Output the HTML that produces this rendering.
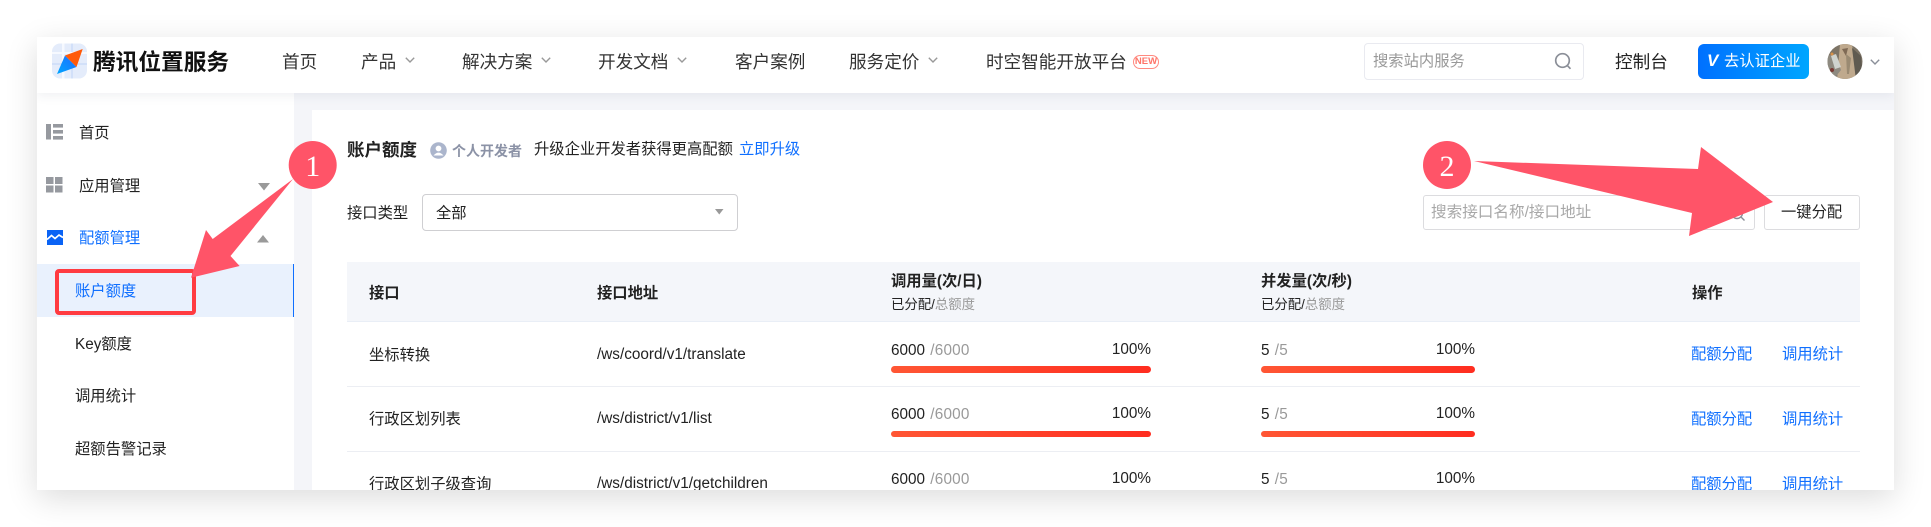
<!DOCTYPE html>
<html lang="zh"><head><meta charset="utf-8"><title>账户额度</title>
<style>
html,body{margin:0;padding:0;width:1931px;height:527px;overflow:hidden;background:#fff}
body{font-family:"Liberation Sans","Noto Sans CJK SC",sans-serif;color:#222;font-size:15.3px}
#panel{position:absolute;left:37px;top:37px;width:1857px;height:453px;overflow:hidden;background:#f4f5f9}
#shadow{position:absolute;left:37px;top:37px;width:1857px;height:453px;box-shadow:0 8px 30px rgba(0,0,0,.14)}
#in{position:absolute;left:-37px;top:-37px;width:1931px;height:527px}
.b{position:absolute;box-sizing:border-box}
.t{position:absolute;white-space:nowrap;transform:translateY(-50%);line-height:24px}
.n{font-size:17.6px;color:#333}
.g{color:#999}
.s{color:#999;margin-left:1px;letter-spacing:.2px}
.l{color:#0f6fff}
.h{font-weight:bold}
.r{transform:translate(-100%,-50%)}
.bar{position:absolute;height:7px;border-radius:4px;background:linear-gradient(90deg,#ff5634,#ff2d20)}
svg{position:absolute;overflow:visible}
</style></head><body>
<div id="shadow"></div>
<div id="panel"><div id="in">
<!-- header -->
<div class="b" style="left:37px;top:37px;width:1857px;height:56px;background:#fff;box-shadow:0 3px 10px rgba(40,50,90,.07);z-index:3">
</div>
<div style="position:absolute;left:0;top:0;z-index:4;width:1931px;height:100px">
<svg width="36" height="36" viewBox="52 43 36 36" style="left:52px;top:43px">
<defs>
<linearGradient id="lg" x1="0" y1="1" x2="1" y2="0"><stop offset="0" stop-color="#00a6ff"/><stop offset="1" stop-color="#1f6cff"/></linearGradient>
<clipPath id="lc"><rect x="52" y="43.500" width="35" height="35" rx="8"/></clipPath>
</defs>
<g clip-path="url(#lc)">
<rect x="52" y="43" width="36" height="36" fill="#e4ecfb"/>
<rect x="62" y="43" width="2.500" height="36" fill="#f6f9ff"/>
<rect x="71" y="43" width="2" height="36" fill="#d2e0f9"/>
<rect x="52" y="63" width="36" height="2" fill="#d2e0f9"/>
<rect x="52" y="52" width="36" height="2" fill="#f6f9ff"/>
</g>
<path d="M57 74L65 55.500L76.500 67Z" fill="url(#lg)"/>
<path d="M82.700 49L65 55.500L76.500 67Z" fill="#ff5a0a"/>
</svg>
<div class="t" style="left:93px;top:62px;font-size:22.700px;font-weight:bold;color:#111">腾讯位置服务</div>
<div class="t n" style="left:282px;top:62px">首页</div>
<div class="t n" style="left:361px;top:62px">产品</div>
<div class="t n" style="left:462px;top:62px">解决方案</div>
<div class="t n" style="left:598px;top:62px">开发文档</div>
<div class="t n" style="left:735px;top:62px">客户案例</div>
<div class="t n" style="left:849px;top:62px">服务定价</div>
<div class="t n" style="left:986px;top:62px">时空智能开放平台</div>
<svg width="10" height="6" style="left:405px;top:57px"><path d="M.8 .8L5 5L9.200 .8" fill="none" stroke="#999" stroke-width="1.400"/></svg>
<svg width="10" height="6" style="left:541px;top:57px"><path d="M.8 .8L5 5L9.200 .8" fill="none" stroke="#999" stroke-width="1.400"/></svg>
<svg width="10" height="6" style="left:677px;top:57px"><path d="M.8 .8L5 5L9.200 .8" fill="none" stroke="#999" stroke-width="1.400"/></svg>
<svg width="10" height="6" style="left:928px;top:57px"><path d="M.8 .8L5 5L9.200 .8" fill="none" stroke="#999" stroke-width="1.400"/></svg>
<div class="b" style="left:1133px;top:55px;width:26px;height:14px;border:1px solid #ff8a80;border-radius:7px;color:#ff7468;font-size:9.500px;font-weight:bold;line-height:12px;text-align:center">NEW</div>
<div class="b" style="left:1364px;top:43px;width:220px;height:37px;border:1px solid #e9eaf0;border-radius:4px;background:#fff"></div>
<div class="t g" style="left:1373px;top:62px">搜索站内服务</div>
<svg width="18" height="18" style="left:1554px;top:52px"><circle cx="8.500" cy="8.500" r="6.800" fill="none" stroke="#8b8f98" stroke-width="1.700"/><path d="M13 13.200L16.500 16.800" stroke="#8b8f98" stroke-width="1.700"/></svg>
<div class="t n" style="left:1615px;top:62px;color:#222">控制台</div>
<div class="b" style="left:1698px;top:44px;width:111px;height:35px;border-radius:6px;background:linear-gradient(90deg,#0070ff,#00a6ff)"></div>
<div class="t" style="left:1707px;top:61px;font-size:17px;font-weight:bold;font-style:italic;color:#fff">V</div>
<div class="t" style="left:1724px;top:62px;color:#fff">去认证企业</div>
<svg width="36" height="36" viewBox="0 0 36 36" style="left:1827px;top:44px">
<defs><clipPath id="av"><ellipse cx="18" cy="17.500" rx="17.500" ry="17.500"/></clipPath></defs>
<g clip-path="url(#av)"><rect width="36" height="36" fill="#7d7466"/>
<path d="M13 0L25 0L30 36L10 36Z" fill="#bfa98d"/>
<path d="M0 12L8 10L14 26L6 36L0 36Z" fill="#8e8a80"/>
<path d="M25 4L34 12L36 36L29 36Z" fill="#5f5a50"/>
<path d="M4 12L9 10L14 23L8 25Z" fill="#cfd3cf"/>
<path d="M15 5L21 4L19 12Z" fill="#7f6a55"/>
<path d="M19 10L24 14L22 30L20 30Z" fill="#9a8a72"/>
<circle cx="5" cy="10" r="1.500" fill="#d8924a"/>
<circle cx="5" cy="26" r="2" fill="#7a3a34"/></g>
</svg>
<svg width="10" height="6" style="left:1870px;top:59px"><path d="M.8 .8L5 5L9.200 .8" fill="none" stroke="#8a8f99" stroke-width="1.400"/></svg>
</div>
<!-- sidebar -->
<div class="b" style="left:37px;top:93px;width:257px;height:397px;background:#fff"></div>
<svg width="17" height="16" style="left:46px;top:124px"><rect x="0" y="0" width="5" height="15.500" fill="#96999f"/><rect x="7" y="0" width="10" height="3.600" fill="#96999f"/><rect x="7" y="6" width="10" height="3.600" fill="#96999f"/><rect x="7" y="12" width="10" height="3.600" fill="#96999f"/></svg>
<svg width="17" height="16" style="left:46px;top:177px"><rect width="7.500" height="7" fill="#96999f"/><rect x="9" width="7.500" height="7" fill="#96999f"/><rect y="8.500" width="7.500" height="7" fill="#96999f"/><rect x="9" y="8.500" width="7.500" height="7" fill="#96999f"/></svg>
<svg width="16" height="15" style="left:47px;top:230px"><rect width="16" height="15" fill="#0a63f5"/><path d="M0 9.500L4.500 5.500L8 8.500L12 5L16 7.500" fill="none" stroke="#fff" stroke-width="1.700"/></svg>
<div class="t" style="left:79px;top:134px">首页</div>
<div class="t" style="left:79px;top:187px">应用管理</div>
<div class="t l" style="left:79px;top:239px">配额管理</div>
<svg width="12" height="8" style="left:258px;top:183px"><path d="M0 0H12L6 7.500Z" fill="#9a9a9a"/></svg>
<svg width="12" height="8" style="left:257px;top:235px"><path d="M0 7.500H12L6 0Z" fill="#9a9a9a"/></svg>
<div class="b" style="left:37px;top:264px;width:257px;height:53px;background:#e9f1fd;border-right:1px solid #0f6fff"></div>
<div class="t l" style="left:75px;top:292px">账户额度</div>
<div class="t" style="left:75px;top:345px">Key额度</div>
<div class="t" style="left:75px;top:397px">调用统计</div>
<div class="t" style="left:75px;top:450px">超额告警记录</div>
<!-- card -->
<div class="b" style="left:312px;top:110px;width:1582px;height:380px;background:#fff"></div>
<div class="t" style="left:347px;top:150px;font-size:17.500px;font-weight:bold;color:#222">账户额度</div>
<svg width="17" height="17" style="left:430px;top:142px"><circle cx="8.500" cy="8.500" r="8.300" fill="#abb5cc"/><circle cx="8.500" cy="6.500" r="2.900" fill="#fff"/><path d="M3.500 13.500Q8.500 7.800 13.500 13.500Z" fill="#fff"/></svg>
<div class="t" style="left:452px;top:151px;font-size:14px;font-weight:bold;color:#8b92a6">个人开发者</div>
<div class="t" style="left:534px;top:150px">升级企业开发者获得更高配额</div>
<div class="t l" style="left:739px;top:150px">立即升级</div>
<div class="t" style="left:347px;top:214px">接口类型</div>
<div class="b" style="left:422px;top:194px;width:316px;height:37px;border:1px solid #cfcfd2;border-radius:4px"></div>
<div class="t" style="left:436px;top:214px">全部</div>
<svg width="9" height="6" style="left:715px;top:209px"><path d="M0 0H8.500L4.250 5.500Z" fill="#999"/></svg>
<div class="b" style="left:1423px;top:195px;width:332px;height:35px;border:1px solid #dcdcdf;border-radius:3px"></div>
<div class="t" style="left:1431px;top:213px;color:#a8a8a8;font-size:15.600px">搜索接口名称/接口地址</div>
<svg width="16" height="16" style="left:1730px;top:206px"><circle cx="7" cy="7" r="5.500" fill="none" stroke="#8b8f98" stroke-width="1.400"/><path d="M11 11L14.500 14.500" stroke="#8b8f98" stroke-width="1.400"/></svg>
<div class="b" style="left:1764px;top:195px;width:96px;height:35px;border:1px solid #dcdcdf;border-radius:3px"></div>
<div class="t" style="left:1781px;top:213px">一键分配</div>
<!-- table -->
<div class="b" style="left:347px;top:262px;width:1513px;height:60px;background:#f4f6fa;border-bottom:1px solid #e9eef6"></div>
<div class="b" style="left:347px;top:386px;width:1513px;height:1px;background:#eceef3"></div>
<div class="b" style="left:347px;top:451px;width:1513px;height:1px;background:#eceef3"></div>
<div class="t h" style="left:369px;top:294px">接口</div>
<div class="t h" style="left:597px;top:294px">接口地址</div>
<div class="t h" style="left:891px;top:282px">调用量(次/日)</div>
<div class="t" style="left:891px;top:305px;font-size:13.400px">已分配/<span class="g">总额度</span></div>
<div class="t h" style="left:1261px;top:282px">并发量(次/秒)</div>
<div class="t" style="left:1261px;top:305px;font-size:13.400px">已分配/<span class="g">总额度</span></div>
<div class="t h" style="left:1692px;top:294px">操作</div>

<div class="t" style="left:369px;top:356px">坐标转换</div>
<div class="t" style="left:597px;top:355px">/ws/coord/v1/translate</div>
<div class="t" style="left:891px;top:351px">6000 <span class="s">/6000</span></div>
<div class="t r" style="left:1151px;top:350px">100%</div>
<div class="bar" style="left:891px;top:366px;width:260px"></div>
<div class="t" style="left:1261px;top:351px">5 <span class="s">/5</span></div>
<div class="t r" style="left:1475px;top:350px">100%</div>
<div class="bar" style="left:1261px;top:366px;width:214px"></div>
<div class="t l" style="left:1691px;top:355px">配额分配</div>
<div class="t l" style="left:1782px;top:355px">调用统计</div>

<div class="t" style="left:369px;top:420px">行政区划列表</div>
<div class="t" style="left:597px;top:419px">/ws/district/v1/list</div>
<div class="t" style="left:891px;top:415px">6000 <span class="s">/6000</span></div>
<div class="t r" style="left:1151px;top:414px">100%</div>
<div class="bar" style="left:891px;top:431px;width:260px;height:6px"></div>
<div class="t" style="left:1261px;top:415px">5 <span class="s">/5</span></div>
<div class="t r" style="left:1475px;top:414px">100%</div>
<div class="bar" style="left:1261px;top:431px;width:214px;height:6px"></div>
<div class="t l" style="left:1691px;top:420px">配额分配</div>
<div class="t l" style="left:1782px;top:420px">调用统计</div>

<div class="t" style="left:369px;top:485px">行政区划子级查询</div>
<div class="t" style="left:597px;top:484px">/ws/district/v1/getchildren</div>
<div class="t" style="left:891px;top:480px">6000 <span class="s">/6000</span></div>
<div class="t r" style="left:1151px;top:479px">100%</div>
<div class="t" style="left:1261px;top:480px">5 <span class="s">/5</span></div>
<div class="t r" style="left:1475px;top:479px">100%</div>
<div class="t l" style="left:1691px;top:485px">配额分配</div>
<div class="t l" style="left:1782px;top:485px">调用统计</div>
</div></div>
<!-- annotations -->
<div class="b" style="left:55px;top:269px;width:141px;height:46px;border:4px solid #ff3b41;border-radius:4px"></div>
<svg width="1931" height="527" viewBox="0 0 1931 527" style="left:0;top:0">
<path d="M293 179L230.500 256L239.600 266L191 277.700L206 230L212.700 239Z" fill="#ff5468"/>
<ellipse cx="312.700" cy="165" rx="24" ry="24" fill="#ff5468"/>
<text x="312.700" y="176" text-anchor="middle" font-family="Liberation Serif,serif" font-size="30" fill="#fff">1</text>
<path d="M1474 161L1698 169L1701 147L1773 202L1689 236L1692 213Z" fill="#ff5468"/>
<ellipse cx="1447" cy="165" rx="24" ry="24" fill="#ff5468"/>
<text x="1447" y="176" text-anchor="middle" font-family="Liberation Serif,serif" font-size="30" fill="#fff">2</text>
</svg>
</body></html>
